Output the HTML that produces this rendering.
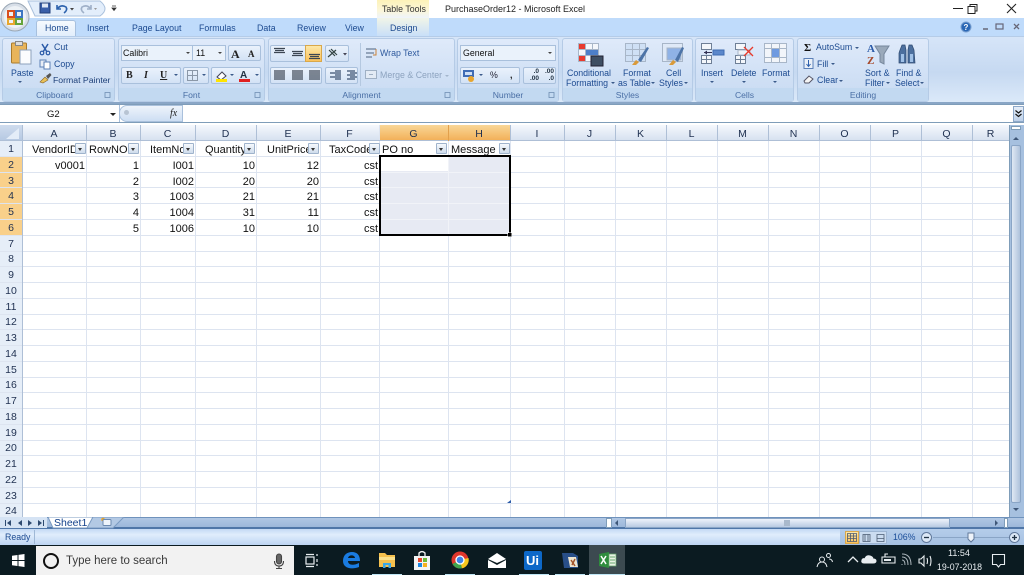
<!DOCTYPE html>
<html><head><meta charset="utf-8"><style>
html,body{margin:0;padding:0;width:1024px;height:575px;overflow:hidden;background:#fff}
body{position:relative;font-family:"Liberation Sans",sans-serif;font-size:8.8px;color:#1c4a90}
.a,.t,.c,.h,.r{position:absolute;white-space:nowrap}
.t{line-height:11px}
.bx{position:absolute;box-sizing:border-box}
.grp{position:absolute;top:38px;height:64px;box-sizing:border-box;border:1px solid #b5cbe6;border-radius:3px;background:linear-gradient(#dfeafa,#d0e0f5 60%,#c8daf1)}
.grp b{position:absolute;left:0;right:0;bottom:0;height:13px;background:#c2d9f1;font-weight:normal;text-align:center;line-height:14px;font-size:8.6px;color:#4a6fa5}
.c{font-size:11px;line-height:18px;color:#111;text-align:right}
.h{top:125px;height:16px;line-height:19px;text-align:center;font-size:10.5px;color:#1f3050}
.r{left:0;width:22px;text-align:center;font-size:10.5px;line-height:17px;color:#1f3050}
.f{position:absolute;top:143px;width:11px;height:11px;box-sizing:border-box;border:1px solid #9fb3cc;background:linear-gradient(#f6f9fd,#cfdcec);border-radius:1px}
.f:after{content:"";position:absolute;left:2px;top:3.5px;border:2.5px solid transparent;border-top:3px solid #333;border-bottom:0}
.ar{position:absolute;border:2px solid transparent;border-top:2.5px solid #3a5a8a;border-bottom:0;width:0;height:0}
.btn{position:absolute;box-sizing:border-box;border:1px solid #a9c0dc;border-radius:2px;background:linear-gradient(#eaf2fc,#d3e2f5)}
</style></head><body>

<!-- title bar -->
<div class="bx" style="left:377px;top:0;width:52px;height:18px;background:linear-gradient(#fdf2b8,#fbf6da 60%,#eef4fb)"></div>
<div class="t" style="left:382px;top:4px;color:#333;font-size:8.8px">Table Tools</div>
<div class="t" style="left:445px;top:4px;color:#222;font-size:9px">PurchaseOrder12 - Microsoft Excel</div>
<svg class="a" style="left:930px;top:0" width="94" height="18" fill="none" stroke="#222">
<path d="M23 8.500H33"/><rect x="38" y="6.500" width="7" height="7"/><path d="M40 6.500V4.500H47V11H45"/><path d="M77 4L86 13M86 4L77 13" stroke-width="1.100"/>
</svg>

<!-- tab strip -->
<div class="bx" style="left:0;top:18px;width:1024px;height:19px;background:#bfdbfb"></div>
<div class="bx" style="left:377px;top:18px;width:52px;height:18px;background:linear-gradient(#f1f5e8,#c9dff8)"></div>
<div class="bx" style="left:36px;top:20px;width:40px;height:18px;background:linear-gradient(#f6fafe,#dfecfb);border:1px solid #a7c0de;border-bottom:0;border-radius:3px 3px 0 0"></div>
<div class="t" style="left:45px;top:23px;font-size:8.900px">Home</div>
<div class="t" style="left:87px;top:23px">Insert</div>
<div class="t" style="left:132px;top:23px">Page Layout</div>
<div class="t" style="left:199px;top:23px">Formulas</div>
<div class="t" style="left:257px;top:23px">Data</div>
<div class="t" style="left:297px;top:23px">Review</div>
<div class="t" style="left:345px;top:23px">View</div>
<div class="t" style="left:390px;top:23px">Design</div>
<svg class="a" style="left:955px;top:20px" width="69" height="15">
<circle cx="11" cy="7" r="5" fill="#2a67b5" stroke="#7aa0d0"/><text x="8.500" y="10" font-size="8" font-weight="bold" fill="#fff" font-family="Liberation Sans">?</text>
<path d="M28 9h5" stroke="#667" stroke-width="1.500"/><rect x="41" y="4" width="7" height="5" fill="none" stroke="#667" stroke-width="1.200"/>
<path d="M59 4l5 5M64 4l-5 5" stroke="#667" stroke-width="1.300"/>
</svg>

<!-- ribbon -->
<div class="bx" style="left:0;top:36px;width:1024px;height:68px;background:linear-gradient(#d6e5f8,#c6d9f1 55%,#dbe9f9);border-top:1px solid #b5cce8;border-bottom:2px solid #8aa6c6"></div>

<div class="grp" style="left:2px;width:113px"><b style="padding-right:8px">Clipboard</b></div>
<div class="grp" style="left:118px;width:147px"><b>Font</b></div>
<div class="grp" style="left:268px;width:187px"><b>Alignment</b></div>
<div class="grp" style="left:457px;width:102px"><b>Number</b></div>
<div class="grp" style="left:562px;width:131px"><b>Styles</b></div>
<div class="grp" style="left:695px;width:99px"><b>Cells</b></div>
<div class="grp" style="left:797px;width:132px"><b>Editing</b></div>

<!-- office button and quick access (above the tab strip) -->
<svg class="a" style="left:0;top:0" width="130" height="38">
<path d="M28 1H100Q110 9 100 16H35Z" fill="#e3eefb" stroke="#a9c0dc"/>
<circle cx="15" cy="17" r="14" fill="#d8dfe8" stroke="#9aa7b5"/>
<circle cx="15" cy="17" r="11" fill="#eef2f6"/>
<rect x="8" y="11" width="6" height="6" fill="none" stroke="#d94f1e" stroke-width="2"/>
<rect x="16" y="11" width="6" height="6" fill="none" stroke="#3c76c2" stroke-width="2"/>
<rect x="8" y="19" width="6" height="5" fill="none" stroke="#e8a72e" stroke-width="2"/>
<rect x="16" y="19" width="6" height="5" fill="none" stroke="#67a53b" stroke-width="2"/>
<rect x="40" y="3" width="10" height="10" fill="#3a5fa8" stroke="#223f78"/><rect x="42" y="3.500" width="6" height="4" fill="#dfe8f5"/>
<path d="M57 5V9H61M57 9Q61 4 66 7Q68 10 64 13" fill="none" stroke="#2d62ad" stroke-width="1.600"/>
<path d="M70 8h4l-2 2.500z" fill="#444"/>
<path d="M91 5V9H87M91 9Q87 4 82 7Q80 10 84 13" fill="none" stroke="#9fb0c8" stroke-width="1.600"/>
<path d="M94 8h3l-1.500 2z" fill="#999"/>
<path d="M112 6h4M112 8l2 2.500 2-2.500z" fill="#333" stroke="#333" stroke-width=".8"/>
</svg>

<!-- clipboard -->
<svg class="a" style="left:8px;top:40px" width="60" height="46">
<rect x="3.500" y="3" width="15" height="20" rx="1" fill="#e8b45a" stroke="#a97b2c"/>
<rect x="7.500" y="1.500" width="7" height="4" fill="#ddd" stroke="#888"/>
<path d="M12 10H23V24H12Z" fill="#fbfcfe" stroke="#8ea2bc"/>
<path d="M34 4l5 8M40 4l-5 8" stroke="#2a5aa8" stroke-width="1.500"/><circle cx="34" cy="13" r="1.800" fill="none" stroke="#2a5aa8" stroke-width="1.200"/><circle cx="40" cy="13" r="1.800" fill="none" stroke="#2a5aa8" stroke-width="1.200"/>
<rect x="32" y="20" width="6" height="7" fill="#e9eef6" stroke="#5c80b5"/><rect x="36" y="22" width="6" height="7" fill="#fff" stroke="#5c80b5"/>
<path d="M32 42l5-5 3 3-5 3z" fill="#e9c25a" stroke="#87632a" stroke-width=".6"/><path d="M38 36l4-3 1.500 2-3.500 4z" fill="#555"/>
</svg>
<div class="t" style="left:11px;top:68px">Paste</div>
<div class="ar" style="left:18px;top:81px"></div>
<div class="t" style="left:54px;top:42px">Cut</div>
<div class="t" style="left:54px;top:59px">Copy</div>
<div class="t" style="left:53px;top:75px;color:#1d3f78;font-size:8.700px">Format Painter</div>

<!-- font -->
<div class="bx" style="left:121px;top:45px;width:72px;height:16px;background:#eaf2fb;border:1px solid #a9c0dc"></div>
<div class="bx" style="left:193px;top:45px;width:33px;height:16px;background:#eaf2fb;border:1px solid #a9c0dc;border-left:0"></div>
<div class="t" style="left:123px;top:48px;color:#111">Calibri</div>
<div class="t" style="left:196px;top:48px;color:#111">11</div>
<div class="ar" style="left:186px;top:52px;border-top-color:#444"></div><div class="ar" style="left:218px;top:52px;border-top-color:#444"></div>
<div class="btn" style="left:228px;top:45px;width:33px;height:16px"></div>
<div class="t" style="left:231px;top:47px;font:bold 12px 'Liberation Serif';color:#222">A</div>
<div class="t" style="left:248px;top:49px;font:bold 9px 'Liberation Serif';color:#222">A</div>
<div class="btn" style="left:121px;top:67px;width:60px;height:17px"></div>
<div class="t" style="left:126px;top:70px;font:bold 10px 'Liberation Serif';color:#222">B</div>
<div class="t" style="left:144px;top:70px;font:italic bold 10px 'Liberation Serif';color:#222">I</div>
<div class="t" style="left:160px;top:70px;font:bold 10px 'Liberation Serif';color:#222;text-decoration:underline">U</div>
<div class="ar" style="left:174px;top:74px"></div>
<div class="btn" style="left:183px;top:67px;width:26px;height:17px"></div>
<svg class="a" style="left:187px;top:70px" width="12" height="12"><path d="M.5.5h10v10H.5zM5.500.5v10M.5 5.500h10" fill="none" stroke="#8b98a8"/></svg>
<div class="ar" style="left:202px;top:74px"></div>
<div class="btn" style="left:211px;top:67px;width:50px;height:17px"></div>
<svg class="a" style="left:214px;top:69px" width="48" height="14">
<path d="M3 8l5-5 4 4-5 4z" fill="#fff" stroke="#445"/><rect x="2" y="10" width="11" height="3" fill="#ffe400"/>
<text x="26" y="9" font-size="10" font-weight="bold" fill="#234" font-family="Liberation Sans">A</text><rect x="25" y="10" width="11" height="3" fill="#e02020"/>
</svg>
<div class="ar" style="left:230px;top:74px"></div><div class="ar" style="left:255px;top:74px"></div>

<!-- alignment -->
<div class="btn" style="left:270px;top:45px;width:52px;height:17px"></div>
<div class="bx" style="left:305px;top:45px;width:17px;height:17px;background:linear-gradient(#fde7a8,#fbc25c);border:1px solid #d9a84b"></div>
<div class="btn" style="left:325px;top:45px;width:24px;height:17px"></div>
<div class="btn" style="left:270px;top:67px;width:52px;height:17px"></div>
<div class="btn" style="left:325px;top:67px;width:33px;height:17px"></div>
<svg class="a" style="left:270px;top:45px" width="95" height="40" stroke="#3c4653" stroke-width="1.200" fill="none">
<path d="M4 3.500h11M5 5.500h9M4 7.500h11M22 6.500h11M23 8.500h9M22 10.500h11M39 9.500h11M40 11.500h9M39 13.500h11"/>
<path d="M4 26h11M4 28h11M4 30h11M4 32h11M4 34h11M22 26h11M22 28h11M22 30h11M22 32h11M22 34h11M39 26h11M39 28h11M39 30h11M39 32h11M39 34h11"/>
<path d="M59 5l6 6M61 4l6 6M58 12l8-7" stroke="#344"/><path d="M73 8h4l-2 2.500z" fill="#445" stroke="none"/>
<path d="M65 26h6M60 28h11M65 30h6M60 32h11M65 34h6M77 26h8M80 28h7M77 30h8M80 32h7M77 34h8" stroke="#3a5070"/>
</svg>
<div class="bx" style="left:360px;top:43px;width:1px;height:43px;background:#b4c8e0"></div>
<svg class="a" style="left:365px;top:46px" width="14" height="36" fill="none" stroke="#6a7d96">
<path d="M1 3h10M1 7h8M1 11h6" stroke-width="1.300"/><path d="M11 3v6h-3" stroke="#c9823a"/>
<rect x=".5" y="24.500" width="11" height="8" fill="#e3ebf5" stroke="#9fb0c4"/><path d="M4 28.500h4" stroke="#9fb0c4"/>
</svg>
<div class="t" style="left:380px;top:48px;color:#2f5a9e">Wrap Text</div>
<div class="t" style="left:380px;top:70px;color:#8da3bf">Merge &amp; Center</div>
<div class="ar" style="left:445px;top:75px;border-top-color:#a3b5cc"></div>

<!-- number -->
<div class="bx" style="left:460px;top:45px;width:96px;height:16px;background:#eaf2fb;border:1px solid #a9c0dc"></div>
<div class="t" style="left:463px;top:48px;color:#111">General</div>
<div class="ar" style="left:548px;top:52px;border-top-color:#444"></div>
<div class="btn" style="left:460px;top:67px;width:60px;height:17px"></div>
<div class="btn" style="left:523px;top:67px;width:33px;height:17px"></div>
<svg class="a" style="left:462px;top:68px" width="14" height="15"><rect x="1" y="2" width="11" height="7" fill="#3f6cb5"/><rect x="3" y="4" width="7" height="3" fill="#cfe0f5"/><circle cx="9" cy="11" r="3" fill="#e8a52e"/></svg>
<div class="ar" style="left:479px;top:74px"></div>
<div class="t" style="left:490px;top:70px;color:#223">%</div>
<div class="t" style="left:510px;top:70px;color:#111;font-weight:bold">,</div>
<div class="t" style="left:530px;top:68px;font-size:6.500px;line-height:7px;color:#234;font-weight:bold;text-align:right">.0<br>.00</div>
<div class="t" style="left:545px;top:68px;font-size:6.500px;line-height:7px;color:#234;font-weight:bold;text-align:right">.00<br>.0</div>

<!-- styles -->
<svg class="a" style="left:574px;top:41px" width="112" height="26" fill="none">
<g stroke="#a8b6c8"><path d="M4.500 2.500h20v18h-20zM4.500 8.500h20M4.500 14.500h20M11.500 2.500v18M18.500 2.500v18" fill="#f4f7fb"/></g>
<rect x="5" y="3" width="6" height="5" fill="#e83a2e"/><rect x="12" y="9" width="12" height="5" fill="#4d7fc9"/><rect x="5" y="15" width="6" height="5" fill="#e83a2e"/>
<rect x="17" y="15" width="12" height="10" fill="#3f4f63" stroke="#223"/>
<g stroke="#a8b6c8"><path d="M51.500 2.500h20v18h-20zM51.500 8.500h20M51.500 14.500h20M58.500 2.500v18M65.500 2.500v18" fill="#cfe0f5"/></g>
<path d="M58 24l4-5 3 2-3 3z" fill="#d99a3a"/><path d="M64 19l9-13 2 1-8 14z" fill="#4d74a8"/>
<g stroke="#a8b6c8"><path d="M88.500 2.500h20v18h-20z" fill="#dfe9f7"/><rect x="93" y="7" width="14" height="12" fill="#8fb2e6"/></g>
<path d="M95 24l4-5 3 2-3 3z" fill="#d99a3a"/><path d="M101 19l7-13 2 1-6 14z" fill="#4d74a8"/>
</svg>
<div class="t" style="left:567px;top:68px">Conditional</div>
<div class="t" style="left:566px;top:78px">Formatting</div><div class="ar" style="left:611px;top:82px"></div>
<div class="t" style="left:623px;top:68px">Format</div>
<div class="t" style="left:618px;top:78px">as Table</div><div class="ar" style="left:651px;top:82px"></div>
<div class="t" style="left:666px;top:68px">Cell</div>
<div class="t" style="left:659px;top:78px">Styles</div><div class="ar" style="left:684px;top:82px"></div>

<!-- cells -->
<svg class="a" style="left:698px;top:41px" width="112" height="26" fill="none">
<g stroke="#6e7f96" fill="#f4f7fb"><path d="M3.500 2.500h10v6h-10zM3.500 14.500h10v8h-10zM8.500 14.500v8M3.500 18.500h10"/><path d="M37.500 2.500h10v6h-10zM37.500 14.500h10v8h-10zM42.500 14.500v8M37.500 18.500h10"/></g>
<rect x="15" y="9" width="11" height="5" fill="#5b87cb" stroke="#3e6bb0"/><path d="M6 11.500h8" stroke="#335" /><path d="M6 11.500l3-2v4z" fill="#335"/>
<path d="M40 9h12v5H40z" fill="#eef2f7" stroke="#a8b6c8"/><path d="M46 6l9 9M55 6l-9 9" stroke="#e8392a" stroke-width="1.300"/>
<path d="M66.500 2.500h22v19h-22zM66.500 7.500h22M66.500 16.500h22M73.500 2.500v19M81.500 2.500v19" fill="#f2f5fa" stroke="#a8b6c8"/><rect x="74" y="8" width="7" height="8" fill="#6f9ae0"/>
</svg>
<div class="t" style="left:701px;top:68px">Insert</div><div class="ar" style="left:710px;top:81px"></div>
<div class="t" style="left:731px;top:68px">Delete</div><div class="ar" style="left:742px;top:81px"></div>
<div class="t" style="left:762px;top:68px">Format</div><div class="ar" style="left:773px;top:81px"></div>

<!-- editing -->
<div class="t" style="left:804px;top:42px;font:bold 11px 'Liberation Serif';color:#111">Σ</div>
<div class="t" style="left:816px;top:42px">AutoSum</div><div class="ar" style="left:855px;top:47px"></div>
<svg class="a" style="left:803px;top:57px" width="12" height="30" fill="none">
<rect x="1" y="1.500" width="9" height="10" fill="#eaf0f8" stroke="#5b80b8"/><path d="M5.500 3v6M3.500 7l2 2.500 2-2.500" stroke="#2b5fae"/>
<path d="M1 24l5-5 4 3-4 4H2z" fill="#f5f5f5" stroke="#556"/>
</svg>
<div class="t" style="left:817px;top:59px">Fill</div><div class="ar" style="left:831px;top:63px"></div>
<div class="t" style="left:817px;top:75px">Clear</div><div class="ar" style="left:839px;top:80px"></div>
<svg class="a" style="left:864px;top:41px" width="60" height="26">
<text x="3" y="11" font-size="11" font-weight="bold" font-family="Liberation Serif" fill="#2a5aa8">A</text>
<text x="3" y="23" font-size="11" font-weight="bold" font-family="Liberation Serif" fill="#a5482a">Z</text>
<path d="M11 5H25L20 13V23L16 21V13Z" fill="#9aa9ba" stroke="#76879c"/>
<path d="M36 9L38 4H41L42 9V22H35V12ZM44 9L45 4H48L50 9L51 22H44Z" fill="#4c6f9e" stroke="#2e4a70" stroke-width=".7"/>
<rect x="37" y="13" width="3" height="8" fill="#9fc0e6"/><rect x="46" y="13" width="3" height="8" fill="#9fc0e6"/>
</svg>
<div class="t" style="left:865px;top:68px">Sort &amp;</div>
<div class="t" style="left:865px;top:78px">Filter</div><div class="ar" style="left:886px;top:82px"></div>
<div class="t" style="left:896px;top:68px">Find &amp;</div>
<div class="t" style="left:895px;top:78px">Select</div><div class="ar" style="left:920px;top:82px"></div>

<!-- dialog launchers -->
<svg class="a" style="left:0;top:0;pointer-events:none" width="1024" height="105" fill="none" stroke="#6c8ab0" stroke-width=".8">
<path d="M105 92.500h5v5h-5zM255 92.500h5v5h-5zM445 92.500h5v5h-5zM549 92.500h5v5h-5z"/>
</svg>

<!-- formula bar -->
<div class="bx" style="left:0;top:104px;width:1024px;height:19px;background:#fff;border-top:1px solid #7f9db9;border-bottom:1px solid #7f9db9"></div>
<div class="bx" style="left:0;top:105px;width:120px;height:17px;background:#fff;border-right:1px solid #a9c0dc"></div>
<div class="t" style="left:47px;top:109px;color:#111;font-size:9.500px">G2</div>
<div class="ar" style="left:110px;top:113px;border:3px solid transparent;border-top:3px solid #222;border-bottom:0"></div>
<div class="bx" style="left:119px;top:105px;width:64px;height:17px;background:linear-gradient(#eef4fb,#cddef3);border:1px solid #a9c0dc;border-radius:8px 0 0 8px"></div>
<div class="a" style="left:124px;top:110px;width:5px;height:5px;background:#b8c4d3;border-radius:50%"></div>
<div class="t" style="left:170px;top:108px;font:italic 10px 'Liberation Serif';color:#222">fx</div>
<div class="bx" style="left:1013px;top:106px;width:11px;height:16px;background:linear-gradient(#e6eef9,#bcd0e9);border:1px solid #8da8c9"></div>
<svg class="a" style="left:1014px;top:108px" width="9" height="12" fill="none" stroke="#111" stroke-width="1.200"><path d="M1.500 2.500l3 2.500 3-2.500M1.500 6l3 2.500 3-2.500"/></svg>
<div class="bx" style="left:0;top:123px;width:1024px;height:2px;background:#fff"></div>

<!-- grid -->
<svg class="a" style="left:0;top:125px" width="1024" height="392" shape-rendering="crispEdges">
<defs><linearGradient id="hg" x1="0" y1="0" x2="0" y2="1"><stop offset="0" stop-color="#f5f8fd"/><stop offset="1" stop-color="#d5e0ef"/></linearGradient>
<linearGradient id="og" x1="0" y1="0" x2="0" y2="1"><stop offset="0" stop-color="#f9d798"/><stop offset="1" stop-color="#f2ae55"/></linearGradient>
<linearGradient id="cg" x1="0" y1="0" x2="0" y2="1"><stop offset="0" stop-color="#cfdcee"/><stop offset="1" stop-color="#b5c8e2"/></linearGradient></defs>
<rect x="0" y="0" width="1009" height="16" fill="url(#hg)"/>
<rect x="0" y="0" width="22" height="16" fill="url(#cg)"/>
<path d="M6 14L19 14L19 3Z" fill="#e4edf8" shape-rendering="auto"/>
<rect x="379" y="0" width="131" height="16" fill="url(#og)"/>
<rect x="0" y="16" width="22" height="376" fill="#e6eef8"/>
<rect x="0" y="31" width="22" height="79" fill="#f9d08a"/>
<g stroke="#dde4f0" fill="none">
<path d="M0 31.500H1009M0 47.500H1009M0 62.500H1009M0 78.500H1009M0 94.500H1009M0 110.500H1009M0 126.500H1009M0 141.500H1009M0 157.500H1009M0 173.500H1009M0 189.500H1009M0 204.500H1009M0 220.500H1009M0 236.500H1009M0 252.500H1009M0 267.500H1009M0 283.500H1009M0 299.500H1009M0 315.500H1009M0 330.500H1009M0 346.500H1009M0 362.500H1009M0 378.500H1009"/>
<path d="M86.500 0V392M140.500 0V392M195.500 0V392M256.500 0V392M320.500 0V392M379.500 0V392M448.500 0V392M510.500 0V392M564.500 0V392M615.500 0V392M666.500 0V392M717.500 0V392M768.500 0V392M819.500 0V392M870.500 0V392M921.500 0V392M972.500 0V392"/>
</g>
<g stroke="#aebfd6" fill="none"><path d="M0 15.500H1009M22.500 0V392M86.500 0V16M140.500 0V16M195.500 0V16M256.500 0V16M320.500 0V16M510.500 0V16M564.500 0V16M615.500 0V16M666.500 0V16M717.500 0V16M768.500 0V16M819.500 0V16M870.500 0V16M921.500 0V16M972.500 0V16"/></g>
<path d="M448.500 0V16" stroke="#e2a04c"/>
<rect x="380" y="31" width="130" height="79" fill="#e7eaf3"/>
<rect x="381" y="32" width="67" height="14" fill="#fff"/>
<path d="M380 47.500H509M380 62.500H509M380 78.500H509M380 94.500H509M448.500 31V110" stroke="#f1f3f8"/>
<rect x="380" y="31" width="130" height="79" fill="none" stroke="#000" stroke-width="2"/>
<rect x="507.500" y="107.500" width="4" height="4" fill="#000" stroke="#fff" stroke-width=".5"/>
<path d="M507 378l4-3v3z" fill="#2a5aa8" shape-rendering="auto"/>
</svg>

<div class="h" style="left:22px;width:64px">A</div><div class="h" style="left:86px;width:54px">B</div><div class="h" style="left:140px;width:55px">C</div><div class="h" style="left:195px;width:61px">D</div><div class="h" style="left:256px;width:64px">E</div><div class="h" style="left:320px;width:59px">F</div><div class="h" style="left:379px;width:69px">G</div><div class="h" style="left:448px;width:62px">H</div><div class="h" style="left:510px;width:54px">I</div><div class="h" style="left:564px;width:51px">J</div><div class="h" style="left:615px;width:51px">K</div><div class="h" style="left:666px;width:51px">L</div><div class="h" style="left:717px;width:51px">M</div><div class="h" style="left:768px;width:51px">N</div><div class="h" style="left:819px;width:51px">O</div><div class="h" style="left:870px;width:51px">P</div><div class="h" style="left:921px;width:51px">Q</div><div class="h" style="left:972px;width:37px">R</div>

<div class="r" style="top:141px">1</div><div class="r" style="top:157px">2</div><div class="r" style="top:173px">3</div><div class="r" style="top:188px">4</div><div class="r" style="top:204px">5</div><div class="r" style="top:220px">6</div><div class="r" style="top:236px">7</div><div class="r" style="top:251px">8</div><div class="r" style="top:267px">9</div><div class="r" style="top:283px">10</div><div class="r" style="top:299px">11</div><div class="r" style="top:314px">12</div><div class="r" style="top:330px">13</div><div class="r" style="top:346px">14</div><div class="r" style="top:362px">15</div><div class="r" style="top:377px">16</div><div class="r" style="top:393px">17</div><div class="r" style="top:409px">18</div><div class="r" style="top:425px">19</div><div class="r" style="top:440px">20</div><div class="r" style="top:456px">21</div><div class="r" style="top:472px">22</div><div class="r" style="top:488px">23</div><div class="r" style="top:503px">24</div>

<!-- header row text -->
<div class="c" style="left:32px;top:141px;width:43px;overflow:hidden;text-align:left">VendorID</div><div class="f" style="left:75px"></div>
<div class="c" style="left:89px;top:141px;width:39px;overflow:hidden;text-align:left">RowNO</div><div class="f" style="left:128px"></div>
<div class="c" style="left:150px;top:141px;width:33px;overflow:hidden;text-align:left">ItemNo</div><div class="f" style="left:183px"></div>
<div class="c" style="left:205px;top:141px;width:39px;overflow:hidden;text-align:left">Quantity</div><div class="f" style="left:244px"></div>
<div class="c" style="left:267px;top:141px;width:41px;overflow:hidden;text-align:left">UnitPrice</div><div class="f" style="left:308px"></div>
<div class="c" style="left:329px;top:141px;width:40px;overflow:hidden;text-align:left">TaxCode</div><div class="f" style="left:369px"></div>
<div class="c" style="left:382px;top:141px;text-align:left">PO no</div><div class="f" style="left:436px"></div>
<div class="c" style="left:451px;top:141px;text-align:left">Message</div><div class="f" style="left:499px"></div>

<!-- data -->
<div class="c" style="left:40px;top:157px;width:45px">v0001</div>
<div class="c" style="left:100px;top:157px;width:39px">1</div><div class="c" style="left:100px;top:173px;width:39px">2</div><div class="c" style="left:100px;top:188px;width:39px">3</div><div class="c" style="left:100px;top:204px;width:39px">4</div><div class="c" style="left:100px;top:220px;width:39px">5</div>
<div class="c" style="left:150px;top:157px;width:44px">I001</div><div class="c" style="left:150px;top:173px;width:44px">I002</div><div class="c" style="left:150px;top:188px;width:44px">1003</div><div class="c" style="left:150px;top:204px;width:44px">1004</div><div class="c" style="left:150px;top:220px;width:44px">1006</div>
<div class="c" style="left:210px;top:157px;width:45px">10</div><div class="c" style="left:210px;top:173px;width:45px">20</div><div class="c" style="left:210px;top:188px;width:45px">21</div><div class="c" style="left:210px;top:204px;width:45px">31</div><div class="c" style="left:210px;top:220px;width:45px">10</div>
<div class="c" style="left:270px;top:157px;width:49px">12</div><div class="c" style="left:270px;top:173px;width:49px">20</div><div class="c" style="left:270px;top:188px;width:49px">21</div><div class="c" style="left:270px;top:204px;width:49px">11</div><div class="c" style="left:270px;top:220px;width:49px">10</div>
<div class="c" style="left:340px;top:157px;width:38px">cst</div><div class="c" style="left:340px;top:173px;width:38px">cst</div><div class="c" style="left:340px;top:188px;width:38px">cst</div><div class="c" style="left:340px;top:204px;width:38px">cst</div><div class="c" style="left:340px;top:220px;width:38px">cst</div>

<!-- vertical scrollbar -->
<div class="bx" style="left:1009px;top:125px;width:15px;height:392px;background:#a6c0df;border-left:1px solid #7f9db9"></div>
<div class="bx" style="left:1011px;top:126px;width:10px;height:4px;background:#fff;border:1px solid #7f9db9"></div>
<div class="bx" style="left:1011px;top:145px;width:10px;height:358px;background:linear-gradient(90deg,#dfe8f4,#aec2db);border:1px solid #8aa5c6;border-radius:2px"></div>
<div class="ar" style="left:1013px;top:137px;border:3px solid transparent;border-bottom:3px solid #3f5778;border-top:0"></div>
<div class="ar" style="left:1013px;top:508px;border:3px solid transparent;border-top:3px solid #3f5778;border-bottom:0"></div>

<!-- sheet tabs / h scrollbar -->
<div class="bx" style="left:0;top:517px;width:1024px;height:12px;background:linear-gradient(#b0c7e4,#9cb7da);border-top:1px solid #6f92bc;border-bottom:2px solid #4f76a8"></div>
<div class="bx" style="left:0;top:517px;width:47px;height:11px;background:#d5e3f4"></div>
<svg class="a" style="left:3px;top:519px" width="42" height="8" fill="#2e4a70"><path d="M2 1h1v6H2zM8 1L4 4l4 3zM19 1l-4 3 4 3zM25 1l4 3-4 3zM35 1l4 3-4 3zM40 1h1v6h-1z"/></svg>
<svg class="a" style="left:47px;top:517px" width="80" height="13">
<path d="M1 0L6 11H41L46 0Z" fill="#fff" stroke="#7b9bc2"/>
<path d="M46 0L40 11H66L77 0Z" fill="#b3c9e4" stroke="#7b9bc2"/>
<circle cx="56" cy="2.500" r="1.800" fill="#e8a52e"/><rect x="56" y="2.500" width="8" height="6" rx="1" fill="#eef4fb" stroke="#6c8ab0"/>
</svg>
<div class="t" style="left:54px;top:516px;font-size:10.500px;color:#15428b;line-height:14px">Sheet1</div>
<div class="bx" style="left:606px;top:518px;width:6px;height:10px;background:#fff;border:1px solid #7f9db9"></div>
<div class="ar" style="left:615px;top:520px;border:3px solid transparent;border-right:3px solid #3f5778;border-left:0"></div>
<div class="bx" style="left:625px;top:518px;width:325px;height:10px;background:linear-gradient(#eef3fa,#b9cbe2);border:1px solid #8aa5c6"></div>
<div class="bx" style="left:784px;top:520px;width:6px;height:6px;background:#a9b9cc"></div>
<div class="ar" style="left:995px;top:520px;border:3px solid transparent;border-left:3px solid #3f5778;border-right:0"></div>
<div class="bx" style="left:1004px;top:518px;width:4px;height:10px;background:#fff;border:1px solid #7f9db9"></div>

<!-- status bar -->
<div class="bx" style="left:0;top:529px;width:1024px;height:16px;background:linear-gradient(#c3d9f4,#e0edfc 35%,#bdd5f3)"></div>
<div class="bx" style="left:34px;top:530px;width:1px;height:14px;background:#9fb8d6"></div>
<div class="t" style="left:5px;top:532px">Ready</div>
<div class="bx" style="left:840px;top:529px;width:184px;height:16px;background:linear-gradient(#b5cdea,#a6c1e2)"></div>
<div class="bx" style="left:845px;top:531px;width:14px;height:13px;background:linear-gradient(#fde7a8,#fbc25c);border:1px solid #d9a84b"></div>
<div class="bx" style="left:859px;top:531px;width:28px;height:13px;background:#cbdcf0;border:1px solid #9db5d2"></div>
<svg class="a" style="left:847px;top:533px" width="40" height="10" fill="none" stroke="#4a5a70" stroke-width=".8"><path d="M.5.5h9v8h-9zM.5 3h9M.5 5.500h9M3.500.5v8M6.500.5v8M16 1.500h7v7h-7zM18 1.500v7M21 1.500v7M30 1.500h7v7h-7zM30 5.500h7"/></svg>
<div class="t" style="left:893px;top:532px;color:#1d4f9a">106%</div>
<svg class="a" style="left:920px;top:530px" width="104" height="15" fill="none">
<circle cx="6.500" cy="7.500" r="5" fill="#dce8f6" stroke="#60789a"/><path d="M4 7.500h5" stroke="#234" stroke-width="1.300"/>
<path d="M13 7.500H92" stroke="#8aa5c6"/>
<path d="M48 3h6v6l-3 3-3-3z" fill="#eef3fa" stroke="#60789a"/>
<circle cx="94.500" cy="7.500" r="5" fill="#dce8f6" stroke="#60789a"/><path d="M92 7.500h5M94.500 5v5" stroke="#234" stroke-width="1.300"/>
</svg>

<!-- taskbar -->
<div class="bx" style="left:0;top:545px;width:1024px;height:30px;background:#0b1b21"></div>
<svg class="a" style="left:12px;top:554px" width="13" height="13" fill="#fff"><path d="M0 1.800L5.500 1V6H0zM6.500.9L12.500 0V6H6.500zM0 7H5.500V12L0 11.200zM6.500 7H12.500V13L6.500 12.100z"/></svg>
<div class="bx" style="left:36px;top:546px;width:258px;height:29px;background:#f2f2f2"></div>
<svg class="a" style="left:42px;top:552px" width="18" height="18"><circle cx="9" cy="9" r="7" fill="none" stroke="#111" stroke-width="2"/></svg>
<div class="t" style="left:66px;top:555px;font-size:11.500px;line-height:13px;color:#3a3a3a">Type here to search</div>
<svg class="a" style="left:273px;top:553px" width="12" height="17" fill="none" stroke="#444" stroke-width="1.100"><rect x="3.500" y="1" width="5" height="10" rx="2.500" fill="#666"/><path d="M1.500 8q0 5 4.500 5t4.500-5M6 13v2M3 15.500h6"/></svg>
<svg class="a" style="left:305px;top:553px" width="14" height="15" fill="none" stroke="#e8edf0" stroke-width="1.200"><path d="M1 1.500h8M1 13.500h8"/><rect x="1" y="4" width="8" height="7"/><path d="M12 1v2M12 6v3M12 11v2"/></svg>

<svg class="a" style="left:342px;top:551px" width="18" height="19"><path d="M1 10C1 4 5 1 10 1c5 0 8 3 8 9H6c0 4 5 5 11 2v4c-8 3-16 1-16-6zM6 7h7c0-3-6-4-7 0z" fill="#1a7be0"/></svg>
<svg class="a" style="left:378px;top:552px" width="18" height="17"><path d="M1 1h6l2 2h8v12H1z" fill="#f5c04e"/><path d="M1 5h16v3H1z" fill="#fbe08c"/><path d="M5 16V11h8v5h-2.500v-3h-3v3z" fill="#39a7e8"/></svg>
<svg class="a" style="left:413px;top:550px" width="19" height="21"><path d="M1 6h16v14H1z" fill="#f4f4f4"/><path d="M6 6V3q3-3 6 0v3" fill="none" stroke="#f4f4f4" stroke-width="1.300"/><rect x="5" y="8" width="4" height="4" fill="#e8492f"/><rect x="10" y="8" width="4" height="4" fill="#6dba3a"/><rect x="5" y="13" width="4" height="4" fill="#1f86e0"/><rect x="10" y="13" width="4" height="4" fill="#f7b01e"/></svg>
<svg class="a" style="left:451px;top:551px" width="18" height="18"><circle cx="9" cy="9" r="8.500" fill="#e0362c"/><path d="M9 9L1.500 13A8.500 8.500 0 0 0 11 17.300z" fill="#3fa34d"/><path d="M9 9L17.500 7A8.500 8.500 0 0 1 11 17.300z" fill="#f7c61e"/><circle cx="9" cy="9" r="4" fill="#3f82e8" stroke="#fff" stroke-width="1.300"/></svg>
<svg class="a" style="left:488px;top:553px" width="18" height="15"><path d="M0 6L9 0l9 6v9H0z" fill="#fff"/><path d="M0 6l9 4 9-4 0 1-9 5-9-5z" fill="#0b1b21"/></svg>
<div class="bx" style="left:524px;top:551px;width:18px;height:19px;background:#0d68c8;border-radius:2px"></div>
<div class="t" style="left:526px;top:554px;font-size:13px;font-weight:bold;line-height:14px;color:#fff">Ui</div>
<svg class="a" style="left:561px;top:551px" width="19" height="19"><path d="M1 2h11l5 3v12H3z" fill="#294f88"/><path d="M7 6h8l2 10H9z" fill="#efe6d0"/><path d="M10 9l4 6M14 8l-3 6" stroke="#a5552a" stroke-width="1.500"/></svg>
<div class="bx" style="left:589px;top:545px;width:36px;height:30px;background:#3c4a50"></div>
<svg class="a" style="left:598px;top:551px" width="19" height="18"><path d="M1 3l10-2v16L1 15z" fill="#2f8c3e"/><path d="M11 3h7v12h-7z" fill="#e9f2e4" stroke="#66a56e" stroke-width=".7"/><path d="M12 6h5M12 9h5M12 12h5" stroke="#66a56e"/><path d="M3 5l5 8M8 5l-5 8" stroke="#fff" stroke-width="1.500"/></svg>
<div class="bx" style="left:372px;top:574px;width:30px;height:1px;background:#bfe6f5"></div>
<div class="bx" style="left:445px;top:574px;width:30px;height:1px;background:#bfe6f5"></div>
<div class="bx" style="left:519px;top:574px;width:30px;height:1px;background:#bfe6f5"></div>
<div class="bx" style="left:555px;top:574px;width:30px;height:1px;background:#bfe6f5"></div>
<div class="bx" style="left:589px;top:574px;width:36px;height:1px;background:#bfe6f5"></div>

<svg class="a" style="left:815px;top:550px" width="140" height="22" fill="none" stroke="#e8edf0" stroke-width="1">
<circle cx="7" cy="9.500" r="2.500"/><path d="M2 17q1-5 5-5t5 5"/><circle cx="13.500" cy="5.500" r="2"/><path d="M14 9q3 0 3.500 3"/>
<path d="M33 12l5-5 5 5" stroke-width="1.300"/>
<path d="M49 13q-3 0-2-3 1-2 3-1 1-4 5-3 3 1 3 3 3 0 3 2t-3 2z" fill="#e8edf0"/>
<path d="M67 7h13v6H67zM70 7V4h3" stroke-width="1.100"/><rect x="69" y="9" width="7" height="2" fill="#e8edf0" stroke="none"/>
<path d="M87 15v-1M90 15q0-5-3-5M93 15q0-8-6-8M96 15q0-11-9-11" stroke="#aab4ba"/>
<path d="M104 9h2l3-3v10l-3-3h-2zM112 8q1 3 0 6M115 6q2 5 0 10" stroke-width="1.100"/>
</svg>
<div class="t" style="left:948px;top:548px;width:20px;text-align:center;font-size:9px;color:#e8edf0">11:54</div>
<div class="t" style="left:937px;top:562px;font-size:8.800px;color:#e8edf0;line-height:10px">19-07-2018</div>
<svg class="a" style="left:991px;top:553px" width="16" height="16" fill="none" stroke="#e8edf0" stroke-width="1.100"><path d="M1.500 1.500h12v10H9.500L7.500 14 5.500 11.500h-4z"/></svg>
</body></html>
